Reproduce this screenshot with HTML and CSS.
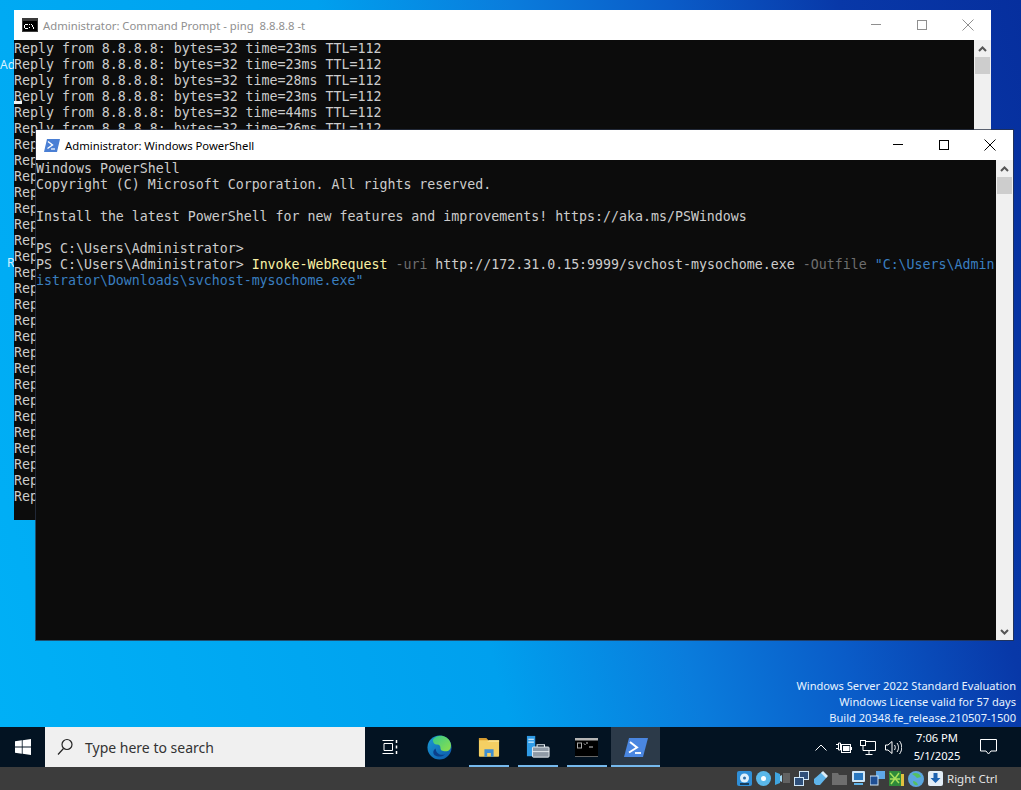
FILE: index.html
```html
<!DOCTYPE html>
<html lang="en">
<head>
    <meta charset="UTF-8">
    <meta name="viewport" content="width=device-width, initial-scale=1.0">
    <title>Windows Server 2022</title>
    <link rel="stylesheet" href="styles.css">
</head>
<body>
    <div class="desktop">
        <span class="icon-label label-ad">Ad</span>
        <span class="icon-label label-r">R</span>

        <!-- Command Prompt window -->
        <div class="window window-cmd">
            <div class="titlebar">
                <svg class="title-icon" width="16" height="14" viewBox="0 0 16 14">
                    <rect width="16" height="14" fill="#3a3a3a"/>
                    <rect x="1" y="3" width="14" height="10" fill="#000"/>
                    <rect x="3" y="6" width="3" height="1" fill="#fff"/>
                    <rect x="2" y="7" width="1" height="3" fill="#fff"/>
                    <rect x="3" y="10" width="3" height="1" fill="#fff"/>
                    <rect x="7" y="6" width="1" height="1" fill="#fff"/>
                    <rect x="7" y="9" width="1" height="1" fill="#fff"/>
                    <rect x="9" y="6" width="1" height="1" fill="#fff"/>
                    <rect x="10" y="7" width="1" height="2" fill="#fff"/>
                    <rect x="11" y="9" width="1" height="2" fill="#fff"/>
                </svg>
                <span class="title-text">Administrator: Command Prompt - ping&nbsp; 8.8.8.8 -t</span>
                <div class="controls">
                    <button class="ctrl"><svg width="10" height="10" viewBox="0 0 10 10"><path d="M0 4.500h10" stroke="currentColor"/></svg></button>
                    <button class="ctrl"><svg width="10" height="10" viewBox="0 0 10 10"><rect x=".5" y=".5" width="9" height="9" fill="none" stroke="currentColor"/></svg></button>
                    <button class="ctrl"><svg width="12" height="12" viewBox="0 0 12 12"><path d="M.5.5l11 11M11.500.5l-11 11" stroke="currentColor"/></svg></button>
                </div>
            </div>
            <div class="body">
                <div class="console" id="pingOutput">
                    <div>Reply from 8.8.8.8: bytes=32 time=23ms TTL=112</div>
                    <div>Reply from 8.8.8.8: bytes=32 time=23ms TTL=112</div>
                    <div>Reply from 8.8.8.8: bytes=32 time=28ms TTL=112</div>
                    <div><span class="caret">R</span>eply from 8.8.8.8: bytes=32 time=23ms TTL=112</div>
                    <div>Reply from 8.8.8.8: bytes=32 time=44ms TTL=112</div>
                    <div>Reply from 8.8.8.8: bytes=32 time=26ms TTL=112</div>
                    <div>Reply from 8.8.8.8: bytes=32 time=24ms TTL=112</div>
                    <div>Reply from 8.8.8.8: bytes=32 time=23ms TTL=112</div>
                    <div>Reply from 8.8.8.8: bytes=32 time=25ms TTL=112</div>
                    <div>Reply from 8.8.8.8: bytes=32 time=23ms TTL=112</div>
                    <div>Reply from 8.8.8.8: bytes=32 time=27ms TTL=112</div>
                    <div>Reply from 8.8.8.8: bytes=32 time=23ms TTL=112</div>
                    <div>Reply from 8.8.8.8: bytes=32 time=23ms TTL=112</div>
                    <div>Reply from 8.8.8.8: bytes=32 time=24ms TTL=112</div>
                    <div>Reply from 8.8.8.8: bytes=32 time=23ms TTL=112</div>
                    <div>Reply from 8.8.8.8: bytes=32 time=26ms TTL=112</div>
                    <div>Reply from 8.8.8.8: bytes=32 time=23ms TTL=112</div>
                    <div>Reply from 8.8.8.8: bytes=32 time=23ms TTL=112</div>
                    <div>Reply from 8.8.8.8: bytes=32 time=25ms TTL=112</div>
                    <div>Reply from 8.8.8.8: bytes=32 time=23ms TTL=112</div>
                    <div>Reply from 8.8.8.8: bytes=32 time=24ms TTL=112</div>
                    <div>Reply from 8.8.8.8: bytes=32 time=23ms TTL=112</div>
                    <div>Reply from 8.8.8.8: bytes=32 time=28ms TTL=112</div>
                    <div>Reply from 8.8.8.8: bytes=32 time=23ms TTL=112</div>
                    <div>Reply from 8.8.8.8: bytes=32 time=23ms TTL=112</div>
                    <div>Reply from 8.8.8.8: bytes=32 time=26ms TTL=112</div>
                    <div>Reply from 8.8.8.8: bytes=32 time=23ms TTL=112</div>
                    <div>Reply from 8.8.8.8: bytes=32 time=24ms TTL=112</div>
                    <div>Reply from 8.8.8.8: bytes=32 time=23ms TTL=112</div>
                </div>
                <div class="scrollbar">
                    <svg class="arrow" width="9" height="6" viewBox="0 0 9 6"><path d="M1 5l3.500-3.500L8 5" fill="none" stroke="#555" stroke-width="2"/></svg>
                    <div class="thumb"></div>
                </div>
            </div>
        </div>

        <!-- PowerShell window -->
        <div class="window window-ps">
            <div class="titlebar">
                <svg class="title-icon" width="16" height="13" viewBox="0 0 16 13">
                    <path d="M3 0h13l-3 13H0z" fill="#4a7fd4"/>
                    <path d="M4 2.500l4.500 3.500L3.500 9.500" fill="none" stroke="#fff" stroke-width="1.400"/>
                    <path d="M7 10h4" stroke="#fff" stroke-width="1.200"/>
                </svg>
                <span class="title-text">Administrator: Windows PowerShell</span>
                <div class="controls">
                    <button class="ctrl"><svg width="10" height="10" viewBox="0 0 10 10"><path d="M0 4.500h10" stroke="currentColor"/></svg></button>
                    <button class="ctrl"><svg width="10" height="10" viewBox="0 0 10 10"><rect x=".5" y=".5" width="9" height="9" fill="none" stroke="currentColor"/></svg></button>
                    <button class="ctrl"><svg width="12" height="12" viewBox="0 0 12 12"><path d="M.5.5l11 11M11.500.5l-11 11" stroke="currentColor"/></svg></button>
                </div>
            </div>
            <div class="body">
                <div class="console">
                    <div>Windows PowerShell</div>
                    <div>Copyright (C) Microsoft Corporation. All rights reserved.</div>
                    <div>&nbsp;</div>
                    <div>Install the latest PowerShell for new features and improvements! https://aka.ms/PSWindows</div>
                    <div>&nbsp;</div>
                    <div>PS C:\Users\Administrator&gt;</div>
                    <div>PS C:\Users\Administrator&gt; <span class="ps-cmd">Invoke-WebRequest</span> <span class="ps-param">-uri</span> http://172.31.0.15:9999/svchost-mysochome.exe <span class="ps-param">-Outfile</span> <span class="ps-str">"C:\Users\Admin</span></div>
                    <div class="ps-str">istrator\Downloads\svchost-mysochome.exe"</div>
                </div>
                <div class="scrollbar">
                    <svg class="arrow" width="9" height="6" viewBox="0 0 9 6"><path d="M1 5l3.500-3.500L8 5" fill="none" stroke="#555" stroke-width="2"/></svg>
                    <div class="thumb"></div>
                    <svg class="arrow arrow-down" width="9" height="6" viewBox="0 0 9 6"><path d="M1 1l3.500 3.500L8 1" fill="none" stroke="#555" stroke-width="2"/></svg>
                </div>
            </div>
        </div>

        <div class="watermark">
            <div>Windows Server 2022 Standard Evaluation</div>
            <div>Windows License valid for 57 days</div>
            <div>Build 20348.fe_release.210507-1500</div>
        </div>
    </div>

    <div class="taskbar">
        <div class="start">
            <svg width="16" height="16" viewBox="0 0 16 16" fill="#fff">
                <path d="M0 2.300l6.800-1v6.300H0zM7.600 1.200L16 0v7.600H7.600zM0 8.400h6.800v6.300l-6.800-1zM7.600 8.400H16V16l-8.400-1.200z"/>
            </svg>
        </div>
        <div class="search">
            <svg width="16" height="18" viewBox="0 0 16 18" fill="none" stroke="#222" stroke-width="1.200">
                <circle cx="10" cy="6.500" r="5"/>
                <path d="M6.500 10.500L1 16.500"/>
            </svg>
            <span>Type here to search</span>
        </div>
        <div class="task-view">
            <svg width="16" height="16" viewBox="0 0 16 16" fill="none" stroke="#fff">
                <path d="M.5 1.500h11M.5 14.500h11M2 4.500h8.500v7H2z"/>
                <path d="M14.500 1v3M14.500 6.500v3M14.500 12v3" stroke-width="1.500"/>
            </svg>
        </div>
        <div class="task-item">
            <svg width="25" height="25" viewBox="0 0 26 26">
                <defs>
                    <linearGradient id="edgeA" x1="0" y1="0" x2="1" y2="1">
                        <stop offset="0" stop-color="#37c98a"/>
                        <stop offset="1" stop-color="#8ee04a"/>
                    </linearGradient>
                    <linearGradient id="edgeB" x1="0" y1="0" x2="1" y2="1">
                        <stop offset="0" stop-color="#1a9ad6"/>
                        <stop offset="1" stop-color="#0c56a8"/>
                    </linearGradient>
                </defs>
                <circle cx="13" cy="13" r="12.500" fill="url(#edgeB)"/>
                <path d="M6 5C10-1 21-1 24.500 8c1.500 5-1 9-5 9-4 0-5.500-1.500-5.500-3.500 0-2-1-3.500-3.500-3.500-2.500 0-4-1-4.500-5z" fill="url(#edgeA)"/>
                <path d="M9 14c0 5 5 8 10 6-3 3-8 3-11 1-2-2-2-5 1-7z" fill="#0b3f8a"/>
            </svg>
        </div>
        <div class="task-item running">
            <svg width="22" height="19" viewBox="0 0 24 20">
                <path d="M1 0h8l2 2h12v17a1 1 0 0 1-1 1H2a1 1 0 0 1-1-1z" fill="#f4cf63"/>
                <path d="M1 0h8l2 2H1z" fill="#d99a2b"/>
                <path d="M1 4h9l2-2h11v2z" fill="#fbe08a"/>
                <path d="M7 20v-8h10v8h-3v-4h-4v4z" fill="#3f8fd2"/>
            </svg>
        </div>
        <div class="task-item running">
            <svg width="24" height="24" viewBox="0 0 26 26">
                <rect x="1" y="1" width="9" height="22" fill="#2f9be6"/>
                <rect x="2.500" y="4" width="6" height="1.500" fill="#bfe3fb"/>
                <rect x="2.500" y="7" width="6" height="1.500" fill="#bfe3fb"/>
                <rect x="7" y="13" width="18" height="11" rx="1" fill="#8f9aa6" stroke="#e8eef2"/>
                <path d="M12 13v-2.500h8V13" fill="none" stroke="#e8eef2" stroke-width="1.200"/>
                <path d="M7 18h18" stroke="#e8eef2"/>
            </svg>
        </div>
        <div class="task-item running">
            <svg width="23" height="19" viewBox="0 0 23 19">
                <rect width="23" height="19" fill="#000"/>
                <rect width="23" height="2.500" fill="#b5b5b5"/>
                <rect x="2.500" y="5" width="4" height="5" fill="none" stroke="#aaa"/>
                <path d="M9 5.500l1.500 1.500M11 5h2M14 9h4" stroke="#ccc"/>
                <rect y="18" width="23" height="1" fill="#666"/>
            </svg>
        </div>
        <div class="task-item running active">
            <svg width="24" height="19" viewBox="0 0 24 19">
                <path d="M5 0h19l-5 19H0z" fill="#4a86e0"/>
                <path d="M6 4l7 5.500-8 5" fill="none" stroke="#fff" stroke-width="2"/>
                <path d="M11 15h6" stroke="#fff" stroke-width="1.800"/>
            </svg>
        </div>

        <div class="tray">
            <svg class="tray-chevron" width="12" height="7" viewBox="0 0 12 7"><path d="M.5 6.500L6 1l5.500 5.500" fill="none" stroke="#fff"/></svg>
            <svg class="tray-power" width="16" height="11" viewBox="0 0 16 11" fill="none" stroke="#fff">
                <path d="M0 2.500h2.500M0 6.500h2.500M2.500 1h2v7h-2zM4.500 4.500h1v4"/>
                <rect x="5.500" y="2.500" width="9" height="8"/>
                <rect x="7" y="4" width="6.500" height="5" fill="#fff" stroke="none"/>
                <rect x="14.500" y="5" width="1.500" height="3" fill="#fff" stroke="none"/>
            </svg>
            <svg class="tray-net" width="16" height="15" viewBox="0 0 16 15" fill="none" stroke="#fff">
                <rect x=".5" y=".5" width="5" height="5"/>
                <path d="M5.500 1.500h10v9H3V5.500M9 10.500v3.500M5.500 14.500h7"/>
            </svg>
            <svg class="tray-vol" width="17" height="15" viewBox="0 0 17 15" fill="none" stroke="#fff">
                <path d="M.5 5h2.500L7 1.500v12L3 10H.5z"/>
                <path d="M9.500 5c1 1.500 1 3.500 0 5M12 3c2 3 2 6 0 9M14.500 1c3 4 3 9 0 13"/>
            </svg>
            <div class="clock">
                <div>7:06 PM</div>
                <div>5/1/2025</div>
            </div>
            <svg class="tray-notify" width="17" height="16" viewBox="0 0 17 16" fill="none" stroke="#fff">
                <path d="M.5.500h16v11.500h-5.500l-2.500 3-2.500-3H.5z"/>
            </svg>
        </div>
    </div>

    <div class="vm-bar">
        <svg width="15" height="15" viewBox="0 0 15 15"><rect width="15" height="15" rx="2" fill="#2f8fd8"/><circle cx="7.500" cy="7" r="4.500" fill="#dff0fb"/><circle cx="7.500" cy="7" r="1.500" fill="#2f6fa8"/><path d="M3 13h9" stroke="#123" stroke-width="1.500"/></svg>
        <svg width="15" height="15" viewBox="0 0 15 15"><circle cx="7.500" cy="7.500" r="7.500" fill="#5ab8ea"/><circle cx="7.500" cy="7.500" r="2.500" fill="#fff"/></svg>
        <svg width="15" height="15" viewBox="0 0 15 15"><path d="M0 1l5 2v9l-5 2z" fill="#3fa5e0"/><path d="M5 5l2-1v7l-2-1z" fill="#9fd6f2"/><path d="M8 3h7M8 5h7M8 7h7M8 9h7M8 11h7" stroke="#888"/></svg>
        <svg width="15" height="15" viewBox="0 0 15 15" fill="#2e4f7a" stroke="#cfe6f7"><rect x="5.500" y=".5" width="9" height="8"/><rect x=".5" y="6.500" width="9" height="8"/></svg>
        <svg width="15" height="15" viewBox="0 0 15 15"><path d="M9 1l5 5-7 8H3l-2-2V8z" fill="#5fb4ea"/><path d="M10 0l5 5-2 2-5-5z" fill="#dcecf7"/></svg>
        <svg width="15" height="15" viewBox="0 0 15 15"><path d="M0 2h6l1 2h8v10H0z" fill="#6e6e6e"/></svg>
        <svg width="15" height="15" viewBox="0 0 15 15"><rect x="1" y="0" width="13" height="11" rx="1" fill="#cfe6f7"/><rect x="3" y="2" width="9" height="7" fill="#2a78c0"/><rect x="3" y="12" width="9" height="2" fill="#5fb4ea"/></svg>
        <svg width="15" height="15" viewBox="0 0 15 15"><rect x="6" y="0" width="9" height="8" fill="#5fa8e8"/><rect x="0" y="5" width="8" height="9" fill="#1f4f94" stroke="#cfe6f7"/></svg>
        <svg width="15" height="15" viewBox="0 0 15 15"><rect width="12" height="15" fill="#2f8a3a"/><path d="M1 2l9 10M10 2l-8 11M1 8h10" stroke="#a8e05a" stroke-width="1.500"/><rect x="12" y="3" width="3" height="12" fill="#e0c040"/></svg>
        <svg width="16" height="16" viewBox="0 0 16 16"><circle cx="8" cy="8" r="8" fill="#5aa6de"/><path d="M4 3c3-2 8-1 9 3l-4 1-2-2zM5 10c2 0 4 1 5 4-3 1-5-1-5-4z" fill="#55c060"/></svg>
        <svg width="15" height="15" viewBox="0 0 15 15"><rect width="15" height="15" rx="2" fill="#e2edf6"/><path d="M5.500 2h4v5h3L7.500 12 2.500 7h3z" fill="#1c62b0"/></svg>
        <span class="host-key">Right Ctrl</span>
    </div>
</body>
</html>
```

FILE: styles.css
```css
* {
    box-sizing: border-box;
    margin: 0;
    padding: 0;
}

html,
body {
    height: 100%;
}

body {
    display: flex;
    flex-direction: column;
    overflow: hidden;
    font-family: "Noto Sans", "Open Sans", sans-serif;
}

.desktop {
    position: relative;
    height: 727px;
    overflow: hidden;
    background: linear-gradient(75deg, #00b0f6 0%, #00a0ee 42%, #0a7cdc 58%, #0a5cc8 71%, #0838a8 85%, #062f9e 100%);
}

.icon-label {
    position: absolute;
    color: #d8f2ff;
    font-size: 12px;
    line-height: 16px;
}

.label-ad {
    left: 0;
    top: 57px;
}

.label-r {
    left: 7px;
    top: 255px;
}

/* windows */
.window {
    position: absolute;
    width: 977px;
    height: 510px;
    display: flex;
    flex-direction: column;
    background-color: #0c0c0c;
}

.window-cmd {
    left: 14px;
    top: 10px;
}

.window-ps {
    left: 36px;
    top: 130px;
    box-shadow: 0 0 0 1px rgba(40, 50, 70, 0.75);
}

.titlebar {
    height: 30px;
    flex-shrink: 0;
    display: flex;
    align-items: center;
    background-color: #fff;
    font-size: 11.300px;
}

.title-icon {
    flex-shrink: 0;
    margin-left: 8px;
}

.title-text {
    margin-left: 5px;
    color: #000;
    white-space: nowrap;
}

.window-cmd .title-text,
.window-cmd .controls {
    color: #8f8f8f;
}

.controls {
    margin-left: auto;
    display: flex;
    color: #000;
}

.ctrl {
    width: 46px;
    height: 30px;
    display: flex;
    align-items: center;
    justify-content: center;
    border: none;
    background: none;
    color: inherit;
}

.body {
    flex: 1;
    min-height: 0;
    display: flex;
}

.console {
    flex: 1;
    min-width: 0;
    overflow: hidden;
    padding-top: 1px;
    color: #cccccc;
    font-family: "DejaVu Sans Mono", "Liberation Mono", monospace;
    font-size: 13.280px;
    line-height: 16px;
}

.console div {
    white-space: pre;
}

.caret {
    box-shadow: inset 0 -3px 0 #f2f2f2;
}

.ps-cmd {
    color: #f9f1a5;
}

.ps-param {
    color: #6e6e6e;
}

.ps-str {
    color: #3a7fc0;
}

.scrollbar {
    width: 17px;
    flex-shrink: 0;
    display: flex;
    flex-direction: column;
    align-items: center;
    background-color: #f0f0f0;
}

.arrow {
    margin-top: 6px;
    flex-shrink: 0;
}

.thumb {
    width: 15px;
    height: 17px;
    margin-top: 5px;
    background-color: #cdcdcd;
}

.arrow-down {
    margin-top: auto;
    margin-bottom: 5px;
}

.watermark {
    position: absolute;
    right: 5px;
    bottom: 1px;
    color: #e8f3ff;
    font-size: 11.100px;
    line-height: 16px;
    text-align: right;
}

/* taskbar */
.taskbar {
    height: 40px;
    flex-shrink: 0;
    display: flex;
    background-color: #031322;
}

.start {
    width: 45px;
    display: flex;
    align-items: center;
    justify-content: center;
}

.search {
    width: 320px;
    display: flex;
    align-items: center;
    gap: 12px;
    padding-left: 12px;
    background-color: #f0f0f0;
    color: #333;
    font-size: 14px;
}

.task-view {
    width: 50px;
    display: flex;
    align-items: center;
    justify-content: center;
}

.task-item {
    width: 49px;
    height: 40px;
    display: flex;
    align-items: center;
    justify-content: center;
    position: relative;
}

.task-item.running::after {
    content: "";
    position: absolute;
    left: 5px;
    right: 4px;
    bottom: 0;
    height: 2px;
    background-color: #76b9ed;
}

.task-item.active {
    background-color: #2c3a49;
}

.task-item.active::after {
    left: 0;
    right: 0;
}

.tray {
    margin-left: auto;
    display: flex;
    align-items: center;
    color: #fff;
    font-size: 11.200px;
}

.tray-chevron {
    margin-right: 9px;
}

.tray-power {
    margin-right: 8px;
}

.tray-net {
    margin-right: 9px;
}

.clock {
    width: 70px;
    line-height: 18px;
    text-align: center;
}

.tray-notify {
    margin: 0 24px 0 8px;
}

/* virtualbox status bar */
.vm-bar {
    height: 23px;
    flex-shrink: 0;
    display: flex;
    align-items: center;
    gap: 4px;
    padding-left: 737px;
    background-color: #3c3c3c;
}

.host-key {
    color: #e6e6e6;
    font-size: 11.500px;
    white-space: nowrap;
}
```
